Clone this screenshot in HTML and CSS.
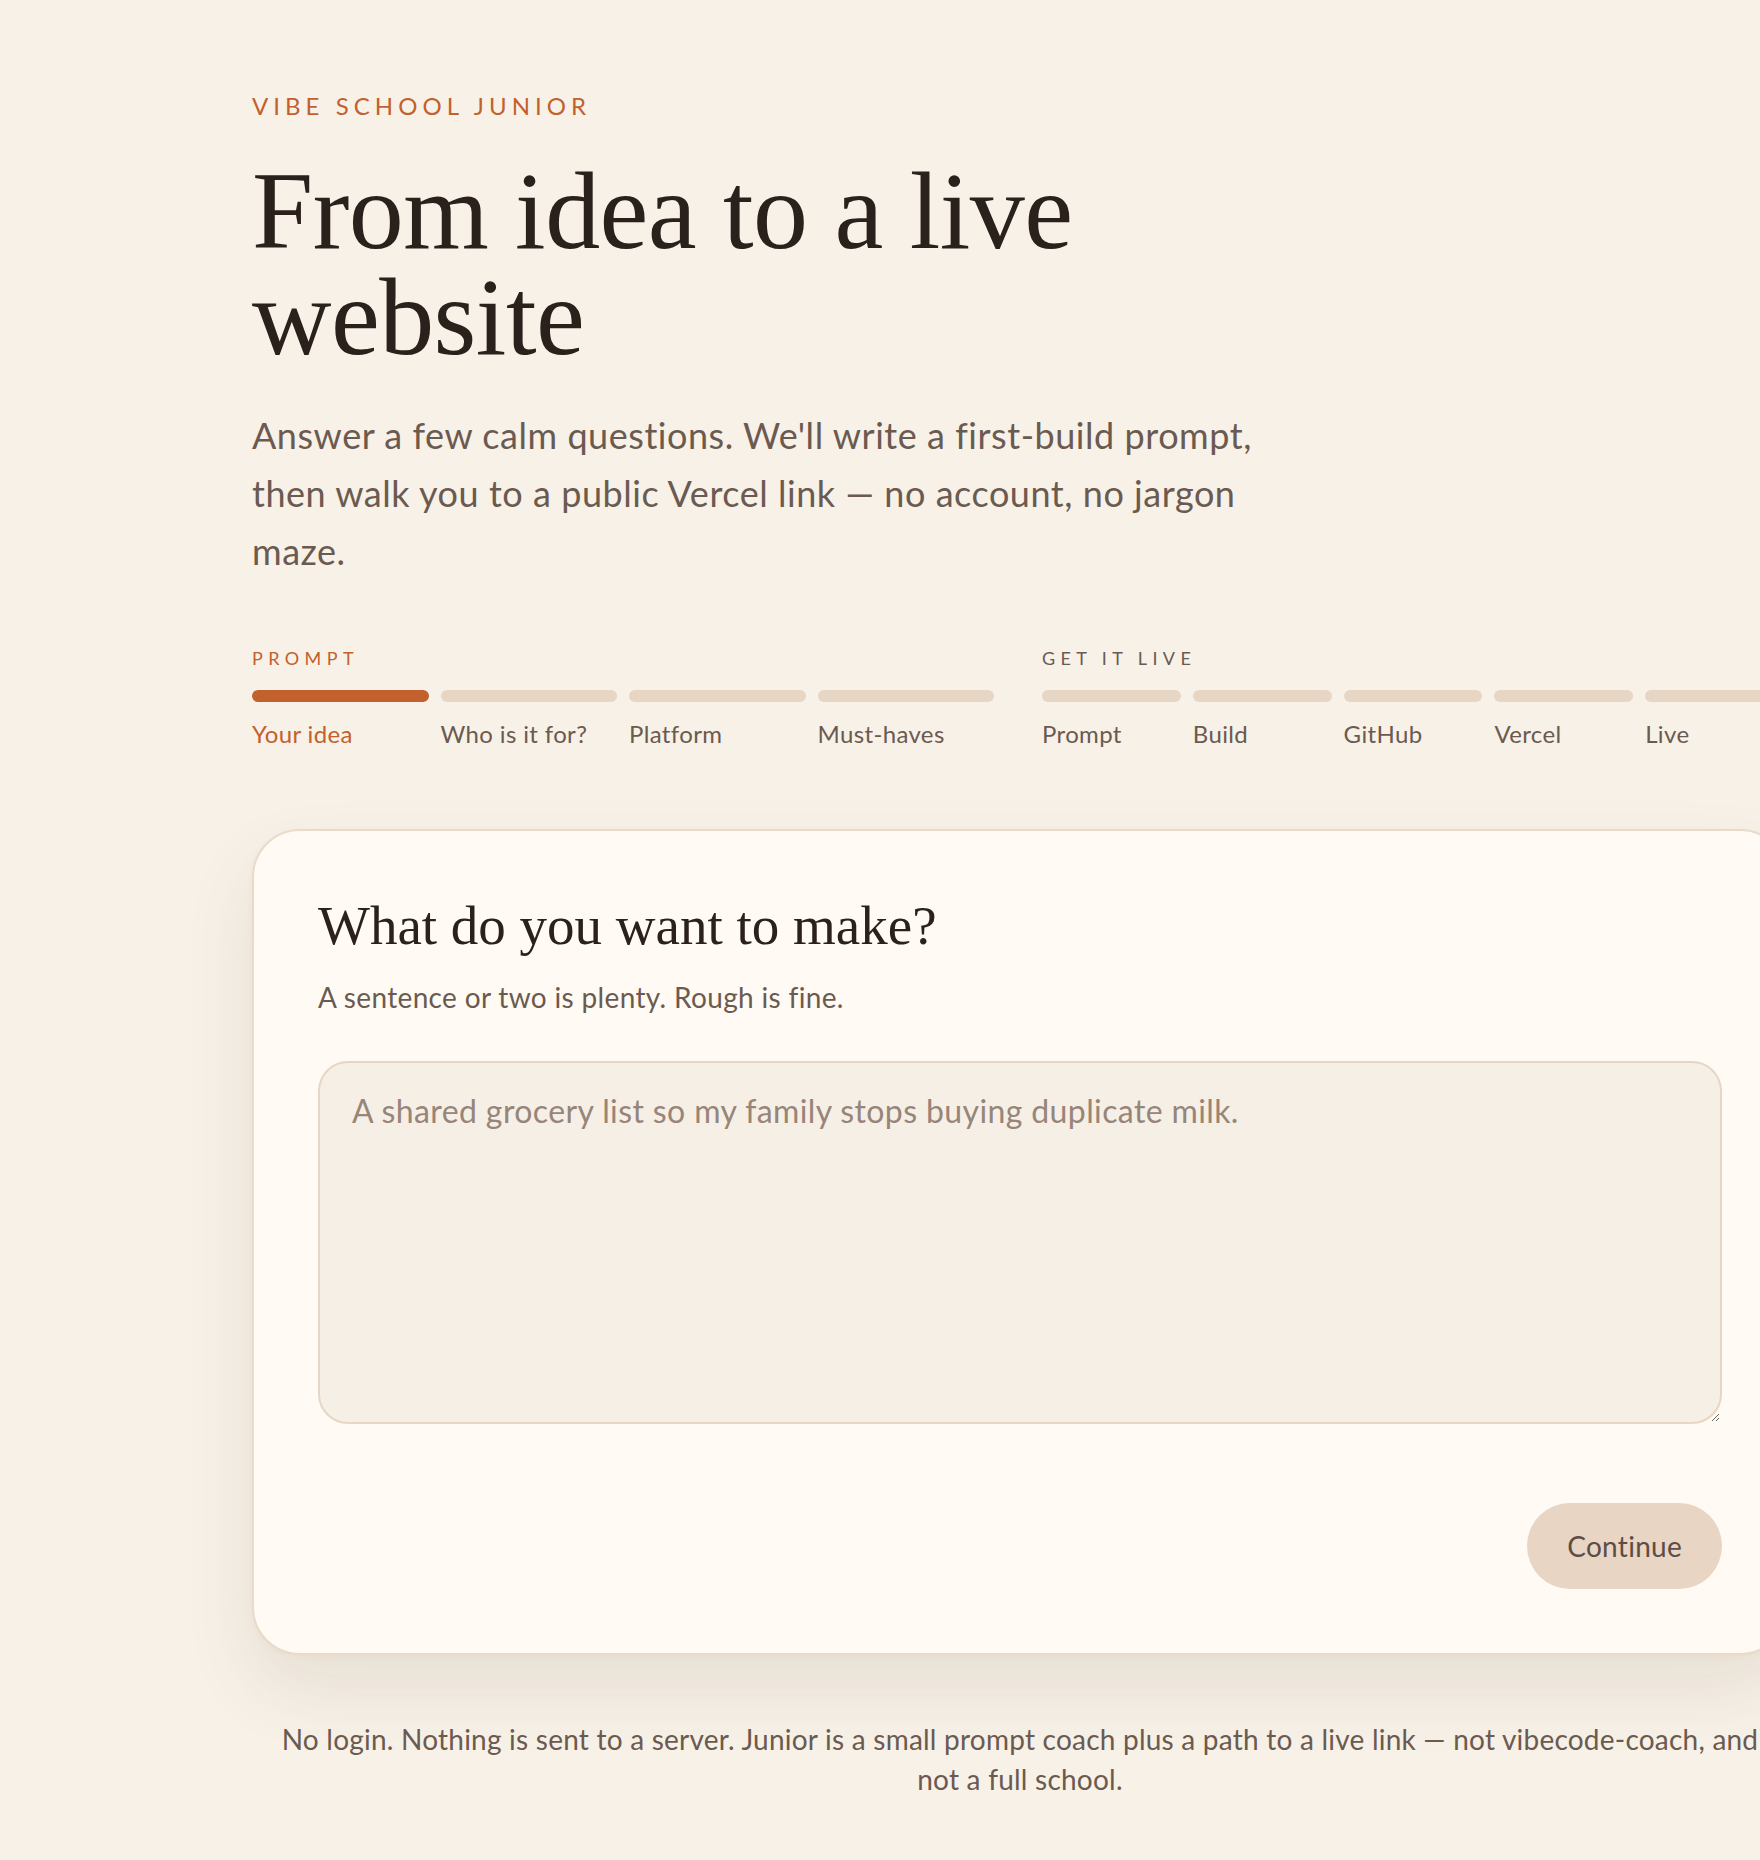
FILE: index.html
```html
<!DOCTYPE html>
<html lang="en">
<head>
<meta charset="utf-8">
<title>Vibe School Junior</title>
<link rel="stylesheet" href="styles.css">
</head>
<body>
<main class="page">
  <header class="hero">
    <p class="eyebrow">Vibe School Junior</p>
    <h1 class="title">From idea to a live website</h1>
    <p class="lead">Answer a few calm questions. We'll write a first-build prompt, then walk you to a public Vercel link — no account, no jargon maze.</p>
  </header>

  <nav class="stepper" aria-label="Progress">
    <div class="phase">
      <div class="phase-label phase-label-active">Prompt</div>
      <ol class="steps steps-4">
        <li class="step step-current"><span class="bar"></span><span class="step-name">Your idea</span></li>
        <li class="step"><span class="bar"></span><span class="step-name">Who is it for?</span></li>
        <li class="step"><span class="bar"></span><span class="step-name">Platform</span></li>
        <li class="step"><span class="bar"></span><span class="step-name">Must-haves</span></li>
      </ol>
    </div>
    <div class="phase">
      <div class="phase-label">Get it live</div>
      <ol class="steps steps-5">
        <li class="step"><span class="bar"></span><span class="step-name">Prompt</span></li>
        <li class="step"><span class="bar"></span><span class="step-name">Build</span></li>
        <li class="step"><span class="bar"></span><span class="step-name">GitHub</span></li>
        <li class="step"><span class="bar"></span><span class="step-name">Vercel</span></li>
        <li class="step"><span class="bar"></span><span class="step-name">Live</span></li>
      </ol>
    </div>
  </nav>

  <section class="card">
    <h2 class="card-title">What do you want to make?</h2>
    <p class="card-hint">A sentence or two is plenty. Rough is fine.</p>
    <textarea class="idea" placeholder="A shared grocery list so my family stops buying duplicate milk."></textarea>
    <div class="actions">
      <button class="btn" type="button">Continue</button>
    </div>
  </section>

  <p class="note">No login. Nothing is sent to a server. Junior is a small prompt coach plus a path to a live link — not vibecode-coach, and not a full school.</p>
</main>
</body>
</html>
```

FILE: styles.css
```css
html, body {
  margin: 0;
  padding: 0;
  overflow-x: hidden;
}

body {
  background: #f7f1e8;
  color: #2b211c;
  font-family: "Lato", "Open Sans", sans-serif;
  min-height: 1860px;
}

.page {
  width: 1536px;
  margin-left: 252px;
  padding-top: 90px;
  padding-bottom: 40px;
}

.eyebrow {
  margin: 0;
  font-size: 24px;
  line-height: 31px;
  letter-spacing: 0.21em;
  text-transform: uppercase;
  color: #c2612d;
}

.title {
  margin: 37px 0 0;
  max-width: 960px;
  font-family: "Liberation Serif", "Times New Roman", serif;
  font-weight: 400;
  font-size: 110px;
  line-height: 106px;
  color: #2b211c;
  letter-spacing: -0.005em;
}

.lead {
  margin: 36px 0 0;
  max-width: 1050px;
  font-size: 36px;
  line-height: 58px;
  letter-spacing: 0.015em;
  color: #6b5a50;
}

.stepper {
  display: grid;
  grid-template-columns: 742px 742px;
  gap: 48px;
  margin-top: 66px;
}

.phase-label {
  font-size: 18px;
  line-height: 25px;
  letter-spacing: 0.3em;
  text-transform: uppercase;
  color: #6b5a50;
}

.phase-label-active {
  color: #c2612d;
}

.steps {
  list-style: none;
  margin: 19px 0 0;
  padding: 0;
  display: grid;
  gap: 12px;
}

.steps-4 { grid-template-columns: repeat(4, 1fr); }
.steps-5 { grid-template-columns: repeat(5, 1fr); }

.step {
  display: flex;
  flex-direction: column;
  gap: 17px;
}

.bar {
  display: block;
  height: 12px;
  border-radius: 6px;
  background: #e8d6c5;
}

.step-name {
  font-size: 24px;
  line-height: 29px;
  letter-spacing: 0.015em;
  color: #6b5a50;
}

.step-current .bar {
  background: #c2612d;
}

.step-current .step-name {
  color: #c2612d;
}

.card {
  margin-top: 81px;
  box-sizing: border-box;
  width: 1536px;
  padding: 62px 64px 64px;
  background: #fffaf3;
  border: 2px solid #e9dac9;
  border-radius: 48px;
  box-shadow: 0 2px 6px rgba(120, 90, 60, 0.04), 0 34px 70px rgba(110, 80, 50, 0.11);
}

.card-title {
  margin: 0;
  font-family: "Liberation Serif", "Times New Roman", serif;
  font-weight: 400;
  font-size: 55px;
  line-height: 66px;
  color: #2b211c;
}

.card-hint {
  margin: 20px 0 0;
  font-size: 28px;
  line-height: 36px;
  letter-spacing: 0.012em;
  color: #6b5a50;
}

.idea {
  display: block;
  box-sizing: border-box;
  width: 100%;
  height: 363px;
  margin-top: 46px;
  padding: 25px 32px;
  font-family: "Lato", "Open Sans", sans-serif;
  font-size: 32px;
  line-height: 46px;
  letter-spacing: 0.012em;
  color: #2b211c;
  background: #f6efe5;
  border: 2px solid #e7d6c4;
  border-radius: 30px;
  resize: vertical;
  outline: none;
}

.idea::placeholder {
  color: #978579;
}

.actions {
  display: flex;
  justify-content: flex-end;
  margin-top: 79px;
}

.btn {
  height: 86px;
  padding: 0 40px;
  border: none;
  border-radius: 43px;
  background: #e8d5c4;
  color: #5e4d44;
  font-family: "Lato", "Open Sans", sans-serif;
  font-size: 28px;
  letter-spacing: 0.01em;
  cursor: pointer;
}

.note {
  margin: 64px 0 0;
  padding: 0 10px;
  text-align: center;
  font-size: 28px;
  line-height: 40px;
  letter-spacing: 0.008em;
  color: #6b5a50;
}
```
